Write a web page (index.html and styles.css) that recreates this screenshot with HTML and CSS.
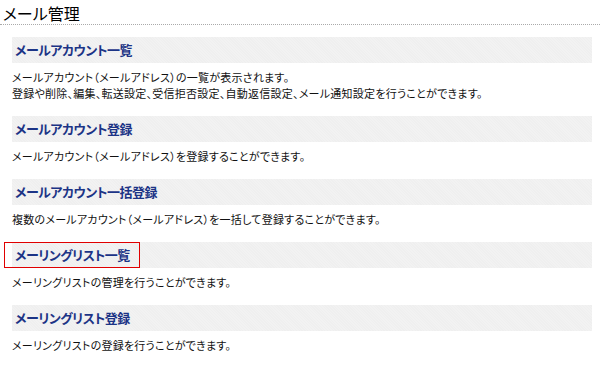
FILE: index.html
```html
<!DOCTYPE html>
<html lang="ja">
<head>
    <meta charset="UTF-8">
    <meta name="viewport" content="width=device-width, initial-scale=1.0">
    <title>メール管理</title>
    <link rel="stylesheet" href="styles.css">
</head>
<body>
    <h1 class="page-title">メール管理</h1>

    <div class="content">
        <div class="section">
            <h2 class="section-title"><a href="#">メールアカウント一覧</a></h2>
            <p>メールアカウント（メールアドレス）の一覧が表示されます。<br>登録や削除、編集、転送設定、受信拒否設定、自動返信設定、メール通知設定を行うことができます。</p>
        </div>

        <div class="section">
            <h2 class="section-title"><a href="#">メールアカウント登録</a></h2>
            <p>メールアカウント（メールアドレス）を登録することができます。</p>
        </div>

        <div class="section">
            <h2 class="section-title"><a href="#">メールアカウント一括登録</a></h2>
            <p>複数のメールアカウント（メールアドレス）を一括して登録することができます。</p>
        </div>

        <div class="section">
            <h2 class="section-title marked"><a href="#">メーリングリスト一覧</a></h2>
            <p>メーリングリストの管理を行うことができます。</p>
        </div>

        <div class="section">
            <h2 class="section-title"><a href="#">メーリングリスト登録</a></h2>
            <p>メーリングリストの登録を行うことができます。</p>
        </div>
    </div>
</body>
</html>
```

FILE: styles.css
```css
body {
    margin: 0;
    padding: 0;
    background-color: #fff;
    color: #111;
    font-family: "Noto Sans CJK JP", "DejaVu Sans", sans-serif;
    font-size: 11px;
    font-feature-settings: "palt";
}
.page-title {
    margin: 0;
    padding: 3px 3px 0;
    height: 21px;
    line-height: 20px;
    font-size: 16px;
    font-weight: normal;
    color: #000;
    border-bottom: 1px dotted #aaa;
}
.content {
    padding: 12px 8px 0 12px;
}
.section-title {
    position: relative;
    margin: 0;
    height: 26px;
    line-height: 26px;
    padding-left: 3px;
    font-size: 13px;
    font-weight: bold;
    letter-spacing: -0.5px;
    background-color: #f0f0f0;
    background-image: repeating-linear-gradient(45deg, #f2f2f2 0, #f2f2f2 1px, #efefef 1px, #efefef 2px);
}
.section-title a {
    color: #1c3486;
    text-decoration: none;
}
/* highlighted item */
.marked::before {
    content: "";
    position: absolute;
    left: -8px;
    top: 0;
    width: 134px;
    height: 24px;
    border: 1px solid #e00000;
}
.section p {
    margin: 6px 0 15px;
    line-height: 16px;
    letter-spacing: 0.25px;
}
```
